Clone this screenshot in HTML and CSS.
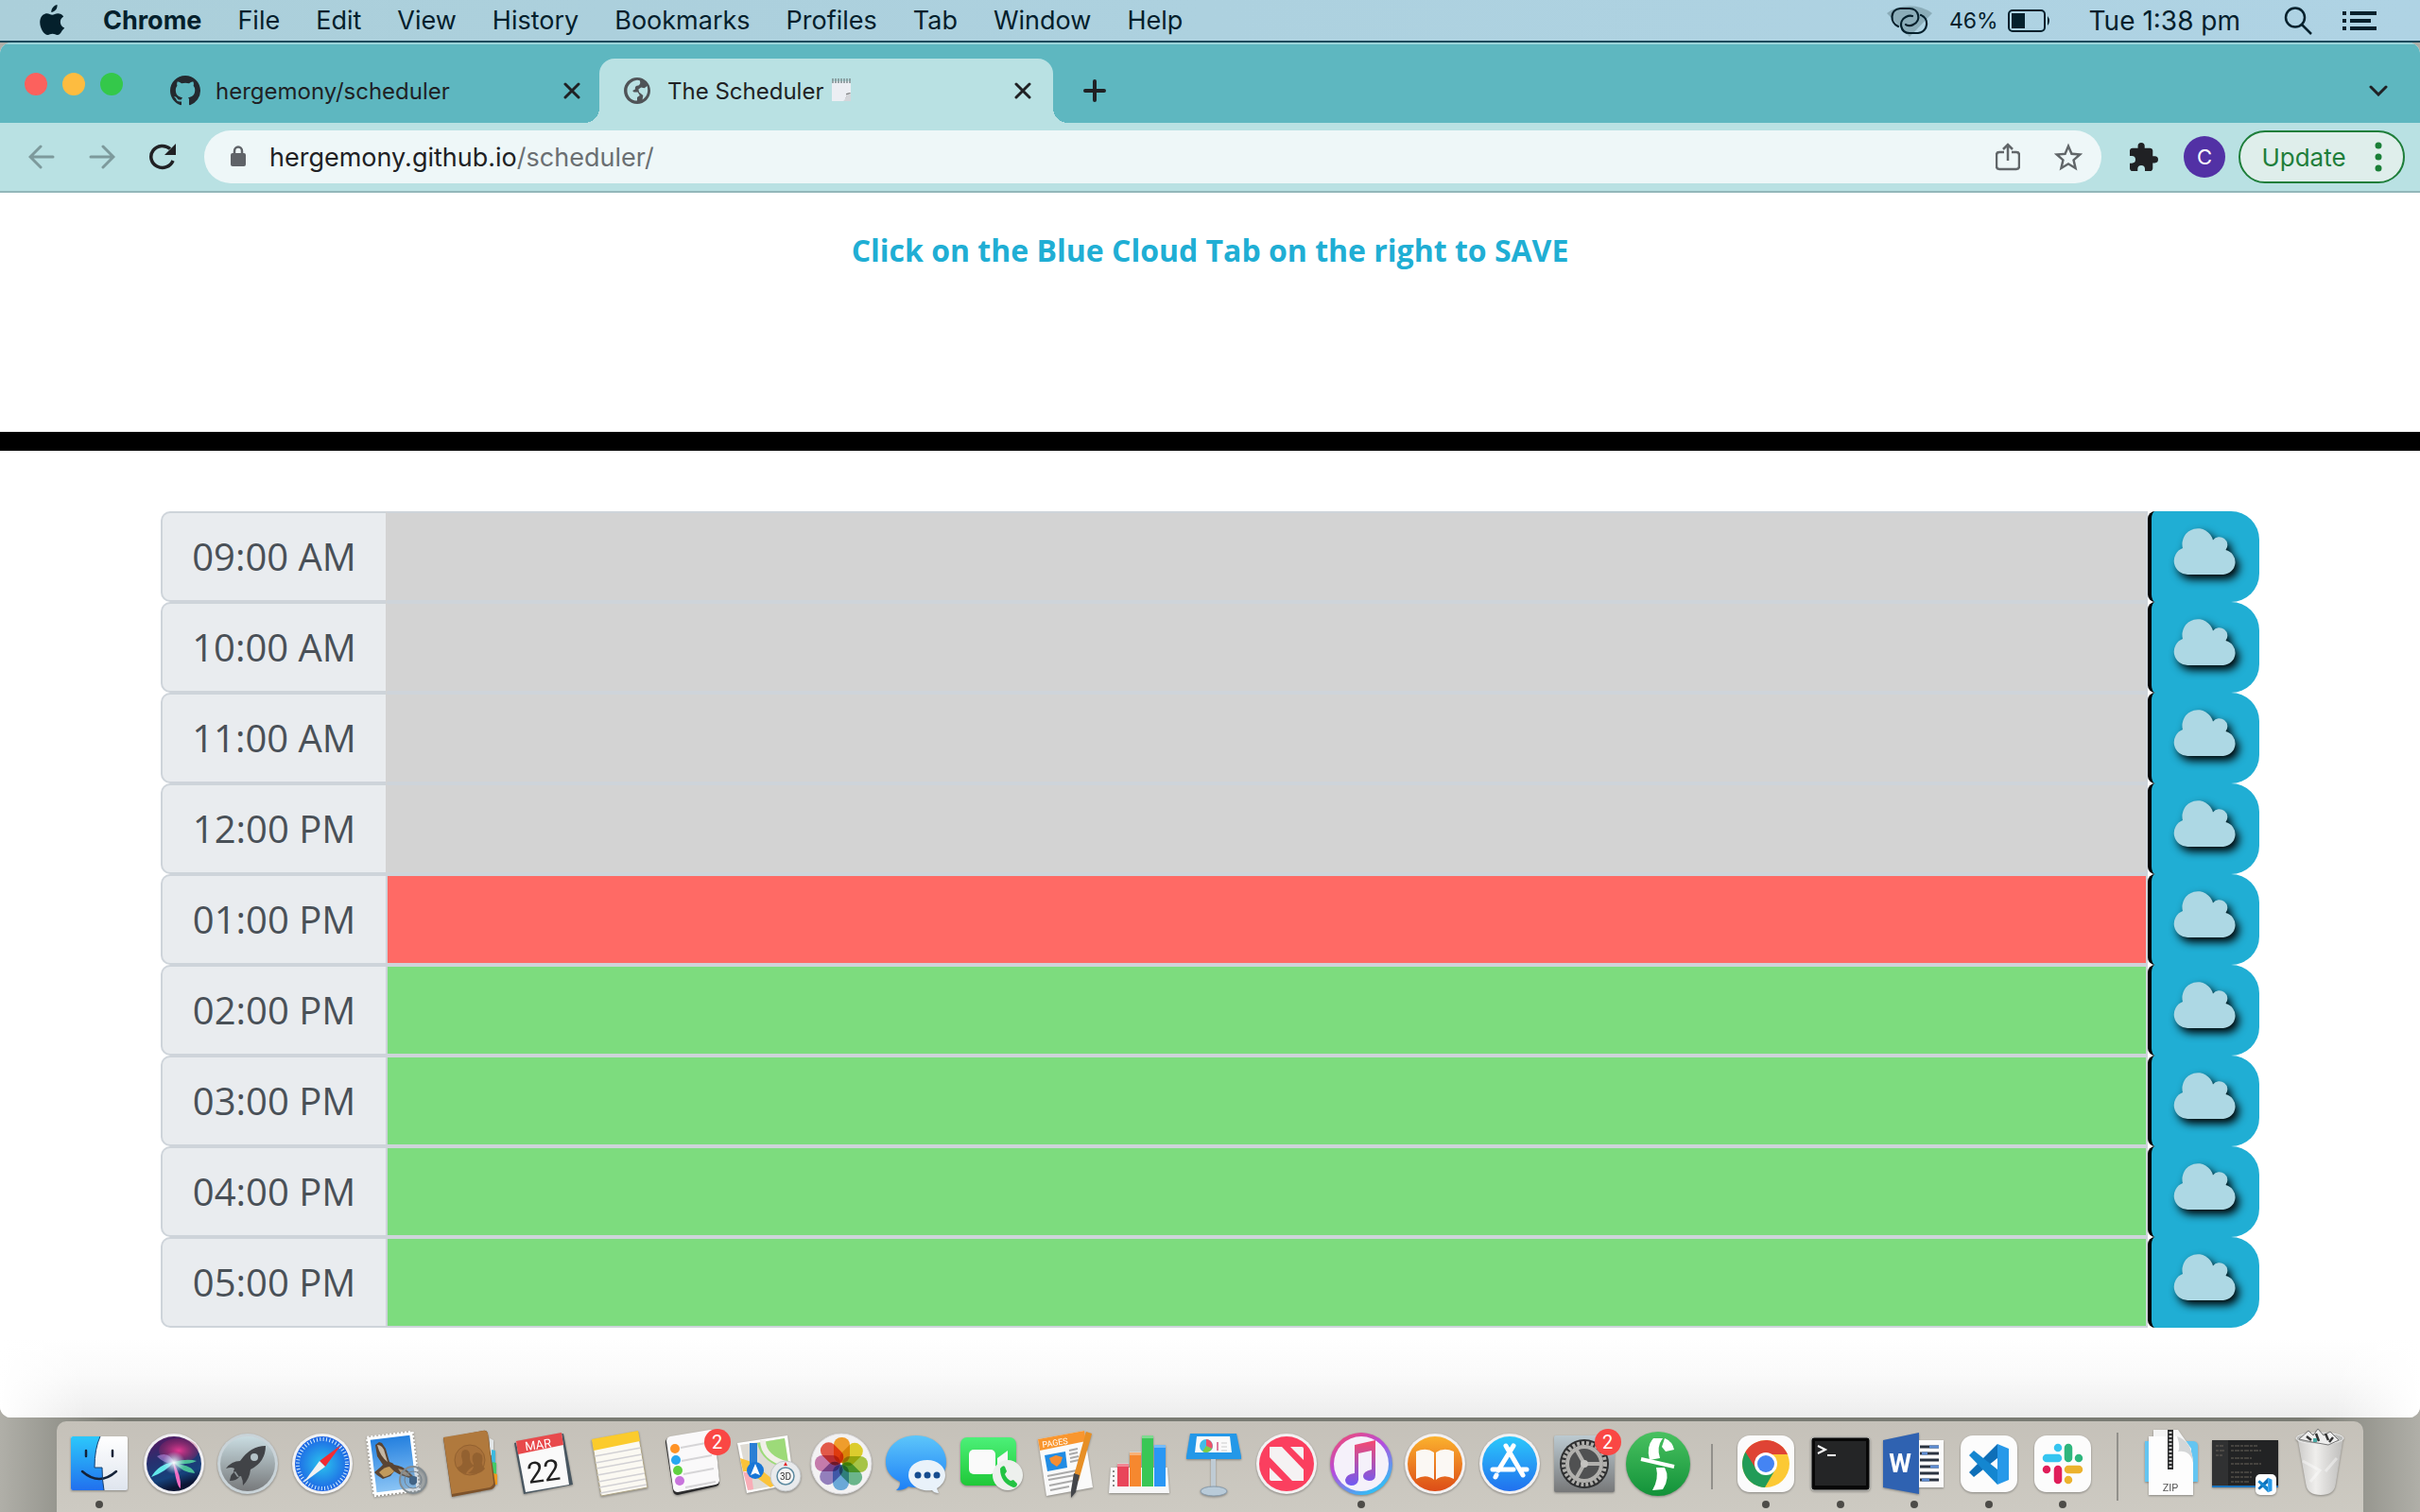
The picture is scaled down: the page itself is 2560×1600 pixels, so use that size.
FILE: index.html
```html
<!DOCTYPE html>
<html lang="en">
<head>
<meta charset="utf-8">
<title>The Scheduler</title>
<link rel="stylesheet" href="styles.css">
</head>
<body>
<div class="desktop">
  <header class="menubar">
    <svg class="apple" width="28" height="34" viewBox="0 0 28 34"><path d="M19.500 0c.3 2.500-.7 4.600-2.200 6.100-1.200 1.300-2.600 1.900-4 1.800-.2-2 .7-4 2-5.500C16.500 1 18.200.2 19.500 0zM24.800 27.200C23.300 30 21.700 32 19.600 32c-2 0-2.700-1.200-5-1.200-2.400 0-3.200 1.200-5 1.200C4.800 32-.2 22.500 1.600 15.400 2.700 11.400 5.700 9.300 8.700 9.300c2.200 0 3.800 1.400 5.600 1.400s3.200-1.400 6-1.400c2.200 0 4.500 1.200 5.900 3.200-5 3-4.200 9.800 1 12-.7 1.300-1.400 1.900-2.400 2.700z"/></svg>
    <nav class="menus">
      <b>Chrome</b><span>File</span><span>Edit</span><span>View</span><span>History</span><span>Bookmarks</span><span>Profiles</span><span>Tab</span><span>Window</span><span>Help</span>
    </nav>
    <div class="status">
      <svg class="hotspot" width="48" height="36" viewBox="0 0 48 36"><path d="M0 10a36 30 0 0 1 48 0L24 35z" fill="#8badb9"/><g fill="none" stroke="#04202c" stroke-width="2.200" stroke-linecap="round"><path d="M12 24C3 20 3 6 14 5h10c10 0 13 13 4 17-3 2-7 1-8 0"/><path d="M36 12c9 3 8 18-3 19h-9C14 31 12 18 20 14q4-2 7-1"/></g></svg>
      <span class="percent">46%</span>
      <svg class="battery" width="46" height="26" viewBox="0 0 46 26"><rect x="1" y="2" width="38" height="22" rx="4" fill="none" stroke="#04202c" stroke-width="2"/><rect x="4" y="5" width="14" height="16" fill="#04202c"/><path d="M42 8q4 5 0 10z" fill="#04202c"/></svg>
      <span class="clock">Tue 1:38 pm</span>
      <svg class="search" width="30" height="30" viewBox="0 0 30 30" fill="none" stroke="#04202c" stroke-width="2.500"><circle cx="12" cy="11.500" r="10"/><path d="M19 19l10 10"/></svg>
      <svg width="36" height="22" viewBox="0 0 36 22" fill="#04202c"><path d="M0 1h4v4H0zM8 1h28v4H8zM0 9h4v4H0zM8 9h22v4H8zM0 17h4v4H0zM8 17h28v4H8z"/></svg>
    </div>
  </header>

  <div class="window">
    <div class="tabstrip">
      <div class="lights"><i class="red"></i><i class="amber"></i><i class="green"></i></div>
      <div class="tab">
        <svg width="32" height="32" viewBox="0 0 16 16" fill="#24292f"><path d="M8 0C3.580 0 0 3.580 0 8c0 3.540 2.290 6.530 5.470 7.590.4.070.55-.17.55-.38 0-.19-.01-.82-.01-1.490-2.010.37-2.530-.49-2.690-.94-.09-.23-.48-.94-.82-1.130-.28-.15-.68-.52-.01-.53.63-.01 1.080.58 1.230.82.72 1.210 1.870.87 2.330.66.070-.52.28-.87.510-1.070-1.780-.2-3.640-.89-3.640-3.950 0-.87.310-1.590.82-2.150-.08-.2-.36-1.020.08-2.120 0 0 .67-.21 2.200.82a7.600 7.600 0 0 1 4 0c1.530-1.040 2.200-.82 2.200-.82.44 1.100.16 1.920.08 2.120.51.560.82 1.270.82 2.150 0 3.070-1.870 3.750-3.650 3.950.29.250.54.730.54 1.480 0 1.070-.01 1.930-.01 2.200 0 .21.150.46.550.38A8.010 8.010 0 0 0 16 8c0-4.420-3.580-8-8-8z"/></svg>
        <span class="title">hergemony/scheduler</span>
        <button class="close" aria-label="Close tab"><svg width="18" height="18" viewBox="0 0 18 18"><path d="M2 2l14 14M16 2L2 16" stroke="#202124" stroke-width="3" stroke-linecap="round"/></svg></button>
      </div>
      <div class="tab active">
        <svg width="28" height="28" viewBox="2 2 20 20" fill="#4f5357"><path d="M12 2C6.480 2 2 6.480 2 12s4.480 10 10 10 10-4.480 10-10S17.520 2 12 2zM4.500 10.500C5.500 7 8 4.500 12 4l2 .3q1 2.500-1 3.700-3 0-2.500 3l-2 1 1 1h3l1.500 2.500-2 1.500v2.500C7.500 19.500 4 16 4.500 10.500zm11.500 8.300l.5-3.300-3-2.500-.5-2 2-1.500 2.500.5 2-1.500c1.200 4 .2 8-3.500 10.300z"/></svg>
        <span class="title">The Scheduler</span>
        <svg class="notepad" width="22" height="26" viewBox="0 0 22 26"><path d="M1 3h20v13l-7 8H1z" fill="#eceef3"/><path d="M21 15l-8 9q5-5 3-8z" fill="#666"/><path d="M13 24q4-3 3-7l5-1v8z" fill="#d4d6da"/><path d="M2 0v5M5 0v5M8 0v5M11 0v5M14 0v5M17 0v5M20 0v5" stroke="#7b8b8e" stroke-width="1.500"/></svg>
        <button class="close" aria-label="Close tab"><svg width="18" height="18" viewBox="0 0 18 18"><path d="M2 2l14 14M16 2L2 16" stroke="#202124" stroke-width="3" stroke-linecap="round"/></svg></button>
      </div>
      <button class="newtab" aria-label="New tab"><svg width="24" height="24" viewBox="0 0 24 24"><path d="M12 2v20M2 12h20" stroke="#202124" stroke-width="4" stroke-linecap="round"/></svg></button>
      <button class="tabsearch" aria-label="Search tabs"><svg width="20" height="12" viewBox="0 0 20 12"><path d="M2 2l8 8 8-8" fill="none" stroke="#202124" stroke-width="3" stroke-linecap="round"/></svg></button>
    </div>

    <div class="toolbar">
      <button aria-label="Back"><svg width="28" height="26" viewBox="0 0 28 26" fill="none" stroke="#7d9a9c" stroke-width="3" stroke-linecap="round"><path d="M26 13H3M13 2L2 13l11 11"/></svg></button>
      <button aria-label="Forward"><svg width="28" height="26" viewBox="0 0 28 26" fill="none" stroke="#7d9a9c" stroke-width="3" stroke-linecap="round"><path d="M2 13h23M15 2l11 11-11 11"/></svg></button>
      <button aria-label="Reload"><svg width="30" height="28" viewBox="0 0 30 28"><path d="M25 18a12 11.500 0 1 1-3-12.500" fill="none" stroke="#202124" stroke-width="3.500"/><path d="M28 0v12H16z" fill="#202124"/></svg></button>
      <div class="omnibox">
        <svg width="18" height="24" viewBox="0 0 18 24"><path d="M5 10V6a4 4.500 0 0 1 8 0v4" fill="none" stroke="#5f6368" stroke-width="2.500"/><rect x="1" y="8" width="16" height="14" rx="2" fill="#5f6368"/></svg>
        <span class="url">hergemony.github.io<span>/scheduler/</span></span>
        <button aria-label="Share"><svg width="26" height="30" viewBox="0 0 26 30" fill="none" stroke="#616669" stroke-width="2.500"><path d="M9 10H4q-3 0-3 3v12q0 3 3 3h18q3 0 3-3V13q0-3-3-3h-5M13 19V2M8 7l5-5 5 5"/></svg></button>
        <button aria-label="Bookmark"><svg width="34" height="32" viewBox="1 1 22 21" fill="#616669"><path d="M22 9.240l-7.190-.62L12 2 9.190 8.630 2 9.240l5.460 4.730L5.820 21 12 17.270 18.180 21l-1.630-7.030L22 9.240zM12 15.400l-3.760 2.270 1-4.280-3.320-2.880 4.380-.38L12 6.100l1.710 4.040 4.380.38-3.320 2.880 1 4.280L12 15.400z"/></svg></button>
      </div>
      <button class="ext" aria-label="Extensions"><svg width="30" height="30" viewBox="2 1 21 21" fill="#202124"><path d="M20.500 11H19V7c0-1.100-.9-2-2-2h-4V3.500a2.500 2.500 0 0 0-5 0V5H4c-1.100 0-2 .9-2 2v3.800h1.500a2.700 2.700 0 0 1 0 5.400H2V20c0 1.100.9 2 2 2h3.800v-1.500a2.700 2.700 0 0 1 5.400 0V22H17c1.100 0 2-.9 2-2v-4h1.500a2.500 2.500 0 0 0 0-5z"/></svg></button>
      <button class="avatar">C</button>
      <button class="update">Update<svg width="8" height="32" viewBox="0 0 8 32" fill="#1a7f37"><circle cx="4" cy="4" r="3.500"/><circle cx="4" cy="16" r="3.500"/><circle cx="4" cy="28" r="3.500"/></svg></button>
    </div>

    <main class="page">
      <div class="hero"><h1>Click on the Blue Cloud Tab on the right to SAVE</h1></div>
      <div class="planner" id="planner"></div>
    </main>
  </div>

  <footer class="dock" id="dock">
    <div class="apps main">
      <div class="app on"><svg viewBox="0 0 72 80"><defs><linearGradient id="fb" x2="0" y2="1"><stop stop-color="#2cc8fb"/><stop offset="1" stop-color="#2170ee"/></linearGradient><linearGradient id="wh" x2="0" y2="1"><stop stop-color="#fff"/><stop offset="1" stop-color="#dfe5ee"/></linearGradient></defs><rect x="6" y="11" width="60" height="57" rx="2" fill="url(#wh)"/><path d="M37 11H8q-2 0-2 2v53q0 2 2 2h33q-2-11-2-24h-8q0-20 6-33z" fill="url(#fb)"/><path d="M18 48q18 16 36 0M22 26v6M50 26v6" fill="none" stroke="#142238" stroke-width="2.500" stroke-linecap="round"/><path d="M37 11q-6 13-6 33h8q0 13 2 24" fill="none" stroke="#17416f"/></svg></div>
      <div class="app"><svg viewBox="0 0 72 80"><defs><linearGradient id="si" x2=".3" y2="1"><stop stop-color="#5c1560"/><stop offset=".45" stop-color="#27306f"/><stop offset=".8" stop-color="#16427c"/><stop offset="1" stop-color="#0c1533"/></linearGradient><radialGradient id="sp"><stop stop-color="#e23a94"/><stop offset="1" stop-color="#b3235e" stop-opacity=".25"/></radialGradient><radialGradient id="sw"><stop stop-color="#fff"/><stop offset="1" stop-color="#bdf" stop-opacity="0"/></radialGradient></defs><circle cx="36" cy="40" r="32" fill="#f0eff2"/><circle cx="36" cy="40" r="29" fill="url(#si)"/><ellipse cx="41" cy="26" rx="21" ry="13" fill="url(#sp)"/><path d="M12 54q8-14 24-16-8 10-24 16z" fill="#62e8ea"/><path d="M36 38q14-4 24-1-8 4-22 3 18 2 20 10-14-1-22-12z" fill="#52d6a0" opacity=".85"/><path d="M35 38q9 14 8 28-4-1-8-28z" fill="#f26bc2"/><path d="M18 32q12-6 18 6-8 4-18-6z" fill="#b58be0" opacity=".6"/><circle cx="36" cy="39" r="12" fill="url(#sw)"/></svg></div>
      <div class="app"><svg viewBox="0 0 72 80"><defs><linearGradient id="la" x2="0" y2="1"><stop stop-color="#c9dce1"/><stop offset="1" stop-color="#77797b"/></linearGradient></defs><circle cx="36" cy="40" r="32" fill="#c9d3d8"/><circle cx="36" cy="40" r="29" fill="url(#la)"/><path d="M55 21q-16 0-27 16-9 0-15 8 6-2 9 0l-1 3 4 6 4-1q2 4 2 10 7-7 8-17 16-8 16-25zM17 58q1-8 6-10l4 6q-3 4-10 4z" fill="#414347"/><circle cx="43" cy="33" r="4" fill="#b3c1c6"/></svg></div>
      <div class="app"><svg viewBox="0 0 72 80"><defs><radialGradient id="sa"><stop stop-color="#2bc4ee"/><stop offset="1" stop-color="#1d64e4"/></radialGradient></defs><circle cx="36" cy="40" r="32" fill="#f2f2f3"/><circle cx="36" cy="40" r="29" fill="url(#sa)"/><circle cx="36" cy="40" r="26" fill="none" stroke="#d8effb" stroke-width="4" stroke-dasharray="1 2.400"/><path d="M56 20L33 37l6 6z" fill="#f32b32"/><path d="M16 60l17-23 6 6z" fill="#f2f2f2"/></svg></div>
      <div class="app"><svg viewBox="0 0 72 80"><defs><linearGradient id="ma" x2="0" y2="1"><stop stop-color="#2480df"/><stop offset="1" stop-color="#8ac4f5"/></linearGradient></defs><g transform="rotate(-7 33 40)"><path d="M9 9h48v62H9z" fill="#fff" stroke="#fff" stroke-width="3" stroke-dasharray="2 2"/><path d="M12 12h42v56H12z" fill="url(#ma)"/></g><path d="M14 20l4-3 3 1 4 6 4 14q4 1 5 3 9 1 16 8l5 5-5 1-9-3-7-4-4 5-8 3-6-4-3-3 6-5 3-3-6-9z" fill="#5a4432"/><path d="M16 20q6 0 8 8l3 10q-8-6-11-18z" fill="#c4b7a4"/><path d="M18 49q6-6 11-6l5 5q-5 5-11 6z" fill="#c19a5c"/><path d="M38 45q8 1 13 8-9 0-13-8z" fill="#a5937c"/><circle cx="54" cy="57" r="14" fill="#71889c" opacity=".3"/><circle cx="54" cy="57" r="14" fill="none" stroke="#838c91" stroke-width="2"/><circle cx="54" cy="57" r="9" fill="none" stroke="#76828c"/><path d="M50 54q4-2 8 0v6q-4 5-8 0z" fill="#426486"/></svg></div>
      <div class="app"><svg viewBox="0 0 72 80"><path d="M56 13l4 2v16h-4z" fill="#e2e6e7"/><path d="M58 25l4 1v13h-4z" fill="#3fb9df"/><path d="M59 38l4 1v12h-4z" fill="#43ca67"/><path d="M60 50l4 1v11h-5z" fill="#ef9a1f"/><path d="M7 13L49 5q4-1 5 3l8 54q0 3-4 5l-42 8z" fill="#7d522a"/><path d="M7 12L49 5q3-1 5 3l6 52q0 3-4 5l-40 7z" fill="#b0793d"/><circle cx="35" cy="36" r="16" fill="#a8713a" stroke="#936130"/><path d="M21 44q8-2 6-8-3-10 3-11 6 0 5 9 0 5 5 8-8 4-9 9-7-2-10-7zM33 50q7-4 6-10-4-10 3-12 8 0 6 10-1 4 3 7-6 8-18 5z" fill="#936130"/></svg></div>
      <div class="app"><svg viewBox="0 0 72 80"><path d="M4 18L56 8l10 54-52 10z" fill="#485660"/><path d="M6 17l48-9 8 54-46 8z" fill="#fafafa"/><path d="M6 16l48-9 2 13-48 10z" fill="#e84a4c"/><g transform="rotate(-8 33 40)" text-anchor="middle"><text x="32" y="24" font-size="13" fill="#fff">MAR</text><text x="34" y="59" font-size="31" fill="#222">22</text></g></svg></div>
      <div class="app"><svg viewBox="0 0 72 80"><path d="M7 15l49-9 10 59-49 9z" fill="#fbf9f2" stroke="#aea485"/><path d="M7 14l49-9 2 11-49 10z" fill="#fbcb2c"/><path d="M10 32l49-9m-48 16l49-9m-48 15l49-9m-48 16l49-9m-48 16l49-9m-48 15l49-9m-48 15l49-9" stroke="#d2d1d4" stroke-width="1.500"/></svg></div>
      <div class="app"><svg viewBox="0 0 72 80"><path d="M12 12l42-7q4 0 5 4l5 50q0 4-4 5l-40 9q-4 0-5-4L7 17q0-4 5-5z" fill="#2c2c2d"/><path d="M12 11l42-7q4 0 5 4l5 49q0 4-4 5l-40 8q-4 0-5-4L8 16q0-4 4-5z" fill="#faf9fa"/><path d="M23 23l32-6m-31 20l32-6m-30 20l32-6m-30 20l32-6" stroke="#d6d5d7" stroke-width="2"/><circle cx="17" cy="24" r="5" fill="#ff9326"/><circle cx="18" cy="36" r="5" fill="#27a7f2"/><circle cx="20" cy="47" r="5" fill="#5fd140"/><circle cx="22" cy="58" r="5" fill="#c874dc"/></svg><span class="badge">2</span></div>
      <div class="app"><svg viewBox="0 0 72 80"><path d="M4 18l53-8 7 51-50 10z" fill="#fff"/><path d="M7 20l47-7 7 47-44 8z" fill="#dedbd4"/><path d="M7 34l12 4 28 23-8 4-24-17-5 0z" fill="#fbc33a"/><path d="M25 18l29-5 5 33Q30 40 25 18z" fill="#9dda79"/><path d="M31 15q0 19 27 26" fill="none" stroke="#f1efe8" stroke-width="6"/><path d="M10 48l9 3 2 16-6 1z" fill="#f8adb7"/><path d="M21 18v22" stroke="#2a7fd5" stroke-width="8"/><circle cx="23" cy="47" r="9" fill="#1876d7"/><path d="M23 40l5 12-5-2-5 2z" fill="#fff"/><circle cx="55" cy="53" r="16" fill="#e8eaec" stroke="#c4c7c9"/><circle cx="55" cy="53" r="9" fill="#f5f6f6" stroke="#5d8ba1" stroke-width="1.500"/><path d="M55 38l2 4h-4z" fill="#e32424"/><text x="55" y="57" font-size="10" text-anchor="middle" fill="#333">3D</text></svg></div>
      <div class="app"><svg viewBox="0 0 72 80"><circle cx="36" cy="40" r="32" fill="#f3f2f3" stroke="#d9d8da"/><g class="petals"><rect x="28" y="12" width="17" height="27" rx="8" fill="#fba62e"/><rect x="28" y="12" width="17" height="27" rx="8" fill="#e7d72f" transform="rotate(45 36 40)"/><rect x="28" y="12" width="17" height="27" rx="8" fill="#aecf49" transform="rotate(90 36 40)"/><rect x="28" y="12" width="17" height="27" rx="8" fill="#70bf92" transform="rotate(135 36 40)"/><rect x="28" y="12" width="17" height="27" rx="8" fill="#6fb1e2" transform="rotate(180 36 40)"/><rect x="28" y="12" width="17" height="27" rx="8" fill="#9a86c6" transform="rotate(225 36 40)"/><rect x="28" y="12" width="17" height="27" rx="8" fill="#cf82b4" transform="rotate(270 36 40)"/><rect x="28" y="12" width="17" height="27" rx="8" fill="#ee5e4c" transform="rotate(315 36 40)"/></g></svg></div>
      <div class="app"><svg viewBox="0 0 72 80"><defs><linearGradient id="ms" x2="0" y2="1"><stop stop-color="#5dc6fa"/><stop offset="1" stop-color="#1d80f7"/></linearGradient></defs><path d="M36 10c18 0 32 12 32 28S54 65 36 65q-5 0-8-1-4 4-13 4 5-4 4-9Q4 52 4 38C4 22 18 10 36 10z" fill="url(#ms)"/><path d="M48 36c11 0 19 7 19 16 0 6-4 11-9 14l2 5q-5 0-7-3C40 70 28 62 28 52s9-16 20-16z" fill="#e9f2fa"/><g fill="#164c8f"><circle cx="38" cy="52" r="3.500"/><circle cx="48" cy="52" r="3.500"/><circle cx="58" cy="52" r="3.500"/></g></svg></div>
      <div class="app"><svg viewBox="0 0 72 80"><defs><linearGradient id="ft" x2="0" y2="1"><stop stop-color="#4cf078"/><stop offset="1" stop-color="#1fc838"/></linearGradient></defs><rect x="5" y="12" width="59" height="51" rx="7" fill="url(#ft)"/><rect x="14" y="25" width="28" height="26" rx="5" fill="#fafafa"/><path d="M44 34l11-8v24l-11-8z" fill="#f6f6f6"/><circle cx="55" cy="52" r="16" fill="#edf0ed"/><path d="M47 45q3-4 5-2l2 5-2 3q2 5 6 7l3-1 4 4q0 4-4 4-14-5-14-20z" fill="#23c343"/></svg></div>
      <div class="app"><svg viewBox="0 0 72 80"><path d="M8 14l49-9 9 60-49 9z" fill="#fafafa"/><path d="M8 14l49-9 2 11-49 10z" fill="#f9962e"/><text x="13" y="23" font-size="9" fill="#fff" transform="rotate(-9 13 23)">PAGES</text><path d="M15 31l22-4 2 17-21 4z" fill="#218ce4"/><path d="M20 34l7-3 7 2-2 6-4 4-6-4z" fill="#f58d32"/><path d="M41 26l9-2m-9 6l9-2m-8 6l9-2m-9 6l9-2M18 53l31-6m-30 10l28-5m-27 11l25-5m-24 10l20-4" stroke="#aaa" stroke-width="2"/><path d="M59 6l6 2-14 50-6-2z" fill="#e78f25"/><path d="M46 50l6 2-4 18-5 6 0-8z" fill="#44464a"/></svg></div>
      <div class="app"><svg viewBox="0 0 72 80"><path d="M7 44h60l2 27H5z" fill="#f7f7f8"/><path d="M10 47v20" stroke="#888" stroke-width="2" stroke-dasharray="2 3"/><path d="M14 40h12v24H14z" fill="#e9455a"/><path d="M27 28h12v36H27z" fill="#f6882f"/><path d="M40 10h12v54H40z" fill="#39c755"/><path d="M53 20h12v44H53z" fill="#2a97f4"/><path d="M14 39h12v4H14zM27 27h12v4H27zM40 10h12v3H40zM53 20h12v3H53z" fill="#fff" opacity=".35"/></svg></div>
      <div class="app"><svg viewBox="0 0 72 80"><path d="M34 34h5v38h-5z" fill="#bfcbd4"/><ellipse cx="37" cy="69" rx="14" ry="5" fill="#b9cbd9" stroke="#869aaa"/><path d="M12 8h49l5 24v3H8v-3z" fill="#2498e8"/><path d="M19 11h35l2 17H17z" fill="#fafafa"/><circle cx="29" cy="21" r="7" fill="#42bce8"/><path d="M29 21V14a7 7 0 0 1 6 10z" fill="#ef5268"/><path d="M29 21l6 3a7 7 0 0 1-10 3z" fill="#7dcd45"/><path d="M41 17v9" stroke="#dd7e9e" stroke-width="2"/><path d="M45 18h6m-6 4h6m-6 4h6" stroke="#ccc"/></svg></div>
      <div class="app"><svg viewBox="0 0 72 80"><circle cx="36" cy="40" r="32" fill="#f3f1f2"/><circle cx="36" cy="40" r="29" fill="#fb3f5f"/><path d="M18 22h13l23 24v12H42L18 33zM40 22h12q2 0 2 2v12zM18 44l14 14H20q-2 0-2-2z" fill="#f5f2f3"/></svg></div>
      <div class="app on"><svg viewBox="0 0 72 80"><defs><linearGradient id="mu" x2=".6" y2="1"><stop stop-color="#fc4961"/><stop offset=".5" stop-color="#b44ddf"/><stop offset="1" stop-color="#33bdf6"/></linearGradient><linearGradient id="no" x2="0" y2="1"><stop stop-color="#f54a70"/><stop offset="1" stop-color="#705af3"/></linearGradient></defs><circle cx="36" cy="40" r="33" fill="url(#mu)"/><circle cx="36" cy="40" r="29" fill="#f5f1fa"/><path d="M29 20l22-5v37q0 6-7 6-6-1-6-5 0-5 9-7V26l-14 3v28q-1 6-8 6-6-1-6-6 1-6 10-7z" fill="url(#no)"/></svg></div>
      <div class="app"><svg viewBox="0 0 72 80"><defs><linearGradient id="bo" x2="0" y2="1"><stop stop-color="#fbb22e"/><stop offset="1" stop-color="#dd4c17"/></linearGradient></defs><circle cx="36" cy="40" r="32" fill="#f3f1f2"/><circle cx="36" cy="40" r="29" fill="url(#bo)"/><path d="M35 28q-8-6-19-1v29q11-6 19 1zM37 28q8-6 19-1v29q-11-6-19 1z" fill="#fbf8f4"/></svg></div>
      <div class="app"><svg viewBox="0 0 72 80"><circle cx="36" cy="40" r="32" fill="#f3f1f2"/><circle cx="36" cy="40" r="29" fill="url(#fb)"/><path d="M32 21l18 31M40 21L24 47M18 46h22m9 0h5M22 52l-1 2" stroke="#fff" stroke-width="5" stroke-linecap="round"/></svg></div>
      <div class="app"><svg viewBox="0 0 72 80"><defs><linearGradient id="se" x2="0" y2="1"><stop stop-color="#bccad1"/><stop offset="1" stop-color="#777879"/></linearGradient></defs><rect x="5" y="10" width="64" height="60" rx="2" fill="url(#se)"/><circle cx="37" cy="40" r="26" fill="#2f3031"/><circle cx="37" cy="40" r="22" fill="none" stroke="#b1b0ad" stroke-width="4" stroke-dasharray="3 2"/><circle cx="37" cy="40" r="18" fill="#505152" stroke="#b1b0ad" stroke-width="4"/><path d="M37 40h18M37 40l-9-16M37 40l-9 16" stroke="#b1b0ad" stroke-width="4"/><circle cx="37" cy="40" r="4" fill="#c4c3c0"/></svg><span class="badge">2</span></div>
      <div class="app"><svg viewBox="0 0 72 80"><defs><linearGradient id="gr" x2="0" y2="1"><stop stop-color="#49c160"/><stop offset="1" stop-color="#129239"/></linearGradient></defs><circle cx="36" cy="40" r="34" fill="url(#gr)"/><path d="M31 13h10q-7 9-3 21l-11 2q-4-14 4-23zM43 13q8 3 10 12l-9 2-4-5zM34 44h9q6 11-2 23l-11 1q7-12 4-24z" fill="#fff"/><path d="M18 35l35 8" stroke="#fff" stroke-width="4"/></svg></div>
    </div>
    <i class="sep short"></i>
    <div class="apps open">
      <div class="app on"><svg viewBox="0 0 72 80"><rect x="6" y="10" width="60" height="60" rx="13" fill="#fbfbfb"/><circle cx="36" cy="40" r="25" fill="#fcc934"/><path d="M36 40L14.400 27.500A25 25 0 0 0 35 65l11-19z" fill="#229c58"/><path d="M36 30h23A25 25 0 0 0 14.400 27.500L26 46z" fill="#df4334"/><circle cx="36" cy="40" r="12" fill="#fff"/><circle cx="36" cy="40" r="9" fill="#4484f3"/></svg></div>
      <div class="app on"><svg viewBox="0 0 72 80"><rect x="5" y="12" width="62" height="56" rx="3" fill="#080808" stroke="#b7b8b5"/><rect x="9" y="16" width="54" height="47" fill="#242526"/><path d="M12 21l8 4-8 4M22 31h9" fill="none" stroke="#fff" stroke-width="2"/></svg></div>
      <div class="app on"><svg viewBox="0 0 72 80"><path d="M38 15h29v50H38z" fill="#fafafa"/><path d="M42 22h20m-20 7h20m-20 7h20m-20 7h20m-20 7h20m-20 7h20" stroke="#2a3340" stroke-width="3"/><path d="M52 22h10m-18 7h6m3 14h9m-18 14h8" stroke="#5d8bd0" stroke-width="3"/><path d="M3 15l38-8v65L3 65z" fill="#2f62b1"/><text x="21" y="49" font-size="27" font-weight="700" text-anchor="middle" fill="#fff">W</text></svg></div>
      <div class="app on"><svg viewBox="0 0 72 80"><rect x="6" y="10" width="60" height="60" rx="13" fill="#fcfcfc"/><g id="code"><path d="M45 19v15L20 54l-5-5z" fill="#0e6fb8"/><path d="M15 31l5-5 25 20v16z" fill="#1486d0"/><path d="M45 19l12 5v33l-12 5z" fill="#2799e9"/></g></svg></div>
      <div class="app on"><svg viewBox="0 0 72 80"><rect x="6" y="10" width="60" height="60" rx="13" fill="#fcfcfc"/><g stroke-width="8.500" stroke-linecap="round"><path d="M19 34h12M31 23v0" stroke="#36c5f0"/><path d="M42 23v11M53 34v0" stroke="#2eb67d"/><path d="M53 46H42M42 57v0" stroke="#ecb22e"/><path d="M31 57V46M19 46v0" stroke="#e01e5a"/></g></svg></div>
    </div>
    <i class="sep"></i>
    <div class="apps files">
      <div class="app"><svg viewBox="0 0 72 80"><path d="M8 16h50q6 0 6 5v38H8z" fill="#64c5f1"/><path d="M17 4h26l14 20v42H17z" fill="#f4f4f4"/><path d="M12 11h30q16 8 17 28v34H12z" fill="#fdfdfd"/><path d="M42 11q4 12 1 16 13-2 16 12Q58 16 42 11z" fill="#d4d6d7"/><path d="M35 4v42" stroke="#2b2c2d" stroke-width="6"/><path d="M35 6v38" stroke="#c8c8c8" stroke-width="3" stroke-dasharray="2 2"/><text x="35" y="69" font-size="11" text-anchor="middle" fill="#555">ZIP</text></svg></div>
      <div class="app"><svg viewBox="0 0 72 80"><path d="M1 15h70v50H1z" fill="#222324"/><path d="M1 63h70v2H1z" fill="#1b73bd"/><path d="M1 15h17v48H1z" fill="#303132"/><path d="M21 21h28m-28 5h32m-32 8h22m-22 6h32m-32 9h22m-22 5h22m-22 5h20M5 21h8m-8 5h9m-9 5h7" stroke="#68645b" stroke-dasharray="3 1 5 1"/><rect x="47" y="51" width="22" height="22" rx="5" fill="#fff"/><use href="#code" transform="translate(44 48) scale(.36)"/></svg></div>
      <div class="app"><svg viewBox="0 0 72 80"><defs><linearGradient id="tr"><stop stop-color="#cbcac8"/><stop offset=".4" stop-color="#efeeec"/><stop offset="1" stop-color="#bdbcba"/></linearGradient></defs><path d="M10 11l10 51q2 11 17 11t17-11l9-51z" fill="url(#tr)" transform="translate(3 0) scale(.92 1)"/><ellipse cx="36" cy="13" rx="25" ry="6" fill="#babbb9" stroke="#eee"/><path d="M14 14l10-9 5 5 5-7 6 7 7-4 9 9-11 5-17-3z" fill="#eee" stroke="#777"/><path d="M22 11l5 4m5-7l3 8m7-8l3 7m5-3l-4 5" stroke="#333" stroke-width="2.500"/><path d="M29 13h4v4h-4z" fill="#49a9a4"/><path d="M18 37l18 10-10 12m28-25L42 48" fill="none" stroke="#fff" stroke-width="3" opacity=".4"/></svg></div>
    </div>
  </footer>
</div>
<script src="planner.js"></script>
</body>
</html>
```
FILE: planner.js
```
const hours = [
  ["09:00 AM", "past"], ["10:00 AM", "past"], ["11:00 AM", "past"],
  ["12:00 PM", "past"], ["01:00 PM", "present"], ["02:00 PM", "future"],
  ["03:00 PM", "future"], ["04:00 PM", "future"], ["05:00 PM", "future"]
];
document.getElementById("planner").innerHTML = hours.map(([time, state], i) => `
  <div class="slot">
    <label for="slot-${i}">${time}</label>
    <textarea id="slot-${i}" class="${state}"></textarea>
    <button class="save" aria-label="Save ${time}">
      <svg width="66" height="50" viewBox="0 0 66 50"><path d="M15 48a14.500 14.500 0 0 1-6-28A16.500 16.500 0 0 1 41 11.500a8.500 8.500 0 0 1 13.500 10.500A13.200 13.200 0 0 1 52 48z"/></svg>
    </button>
  </div>`).join("");
```
FILE: styles.css
```css
* { box-sizing: border-box; }
html, body { height: 100%; }
body { margin: 0; font-family: Inter, "Liberation Sans", sans-serif; }
svg { display: block; flex: none; }
button { border: 0; padding: 0; background: none; font: inherit; color: inherit; display: flex; align-items: center; justify-content: center; }

.desktop {
  min-height: 100vh;
  display: flex;
  flex-direction: column;
  background: linear-gradient(90deg, #b0afa8, #7a7b73 5%, #7a7b73 95%, #b0afa8);
  overflow: hidden;
}

.menubar {
  height: 45px;
  flex: none;
  display: flex;
  align-items: center;
  padding: 0 46px 0 41px;
  background: linear-gradient(90deg, #abcfda, #afd3e4);
  border-bottom: 2px solid #1d4a5c;
  color: #04202c;
  font-size: 27px;
}
.apple { fill: #04202c; }
.menus { display: flex; gap: 38px; margin-left: 40px; }
.status { display: flex; align-items: center; margin-left: auto; }
.percent { font-size: 23px; margin: 0 10px 0 18px; }
.clock { margin: 0 46px 0 40px; font-size: 28px; }
.search { margin-right: 32px; }

.window {
  flex: 1;
  display: flex;
  flex-direction: column;
  border-radius: 12px;
  overflow: hidden;
  background: #fff;
}

.tabstrip {
  height: 85px;
  flex: none;
  display: flex;
  align-items: flex-end;
  padding: 0 34px 0 26px;
  background: #5eb7c0;
  border-top: 2px solid #9ad3d9;
  color: #202124;
  font-size: 24px;
}
.lights { display: flex; gap: 16px; margin: 0 32px 29px 0; }
.lights i { width: 24px; height: 24px; border-radius: 50%; }
.red { background: #fc615d; }
.amber { background: #fdbc40; }
.green { background: #34c84a; }
.tab { width: 472px; height: 68px; display: flex; align-items: center; padding: 0 20px 0 18px; }
.tab .title { margin-left: 16px; }
.tab .close { margin-left: auto; }
.active { position: relative; width: 480px; padding: 0 23px 0 26px; background: #b9e1e3; border-radius: 16px 16px 0 0; }
.active .title { margin-left: 18px; }
.active::before, .active::after { content: ""; position: absolute; bottom: 0; width: 16px; height: 16px; }
.active::before { right: 100%; background: radial-gradient(circle at 0 0, transparent 16px, #b9e1e3 16px); }
.active::after { left: 100%; background: radial-gradient(circle at 100% 0, transparent 16px, #b9e1e3 16px); }
.notepad { margin-left: 8px; }
.newtab { margin-left: 32px; height: 68px; }
.tabsearch { margin-left: auto; height: 68px; }

.toolbar {
  height: 74px;
  flex: none;
  display: flex;
  align-items: center;
  padding: 0 16px 0 30px;
  background: #b9e1e3;
  border-bottom: 2px solid #93b7ba;
}
.toolbar > button + button { margin-left: 36px; }
.omnibox {
  flex: 1;
  height: 56px;
  display: flex;
  align-items: center;
  margin-left: 28px;
  padding: 0 18px 0 27px;
  border-radius: 28px;
  background: #eef7f8;
}
.url { flex: 1; margin-left: 24px; font-size: 27px; color: #202124; }
.url span { color: #6a6f72; }
.omnibox button + button { margin-left: 34px; }
.toolbar > .ext { margin-left: 30px; }
.toolbar > .avatar { width: 44px; height: 44px; margin-left: 27px; border-radius: 50%; background: #5231a5; color: #fff; font-size: 22px; }
.toolbar > .update { width: 176px; height: 56px; margin-left: 14px; gap: 30px; border: 2px solid #1e7e3a; border-radius: 28px; background: #dfeeeb; color: #1e7e3a; font-size: 26px; }

.page {
  flex: 1;
  font-family: "Open Sans", sans-serif;
  background:
    linear-gradient(90deg, #fff, transparent 90px calc(100% - 90px), #fff),
    linear-gradient(transparent calc(100% - 84px), #fafafa calc(100% - 45px), #ededed);
}
.hero { height: 273px; padding-top: 37px; border-bottom: 20px solid #000; }
h1 { margin: 0; text-align: center; font-size: 32px; line-height: 48px; color: #20aed4; }
.planner { padding: 64px 170px 0; }
.slot { display: flex; height: 96px; }
.slot label {
  width: 238px;
  display: flex;
  align-items: center;
  justify-content: center;
  padding-bottom: 2px;
  border: 2px solid #ced4da;
  border-right: 0;
  border-radius: 10px 0 0 10px;
  background: #e9ecef;
  color: #495057;
  font-size: 40px;
}
.slot textarea { flex: 1; min-width: 0; padding: 0; border: 2px solid #ced4da; resize: none; outline: 0; }
.slot .past { background: #d3d3d3; border-left-color: #d3d3d3; }
.present { background: #ff6a65; }
.future { background: #7ddc7e; }
.save { width: 118px; padding-bottom: 8px; border-left: 4px solid #000; border-radius: 8px 30px 30px 8px; background: #20aed4; }
.save path { fill: #add8e4; filter: drop-shadow(4px 5px 5px #000); }
.save svg { overflow: visible; }

.dock {
  height: 96px;
  flex: none;
  display: flex;
  margin: 4px 60px 0;
  padding: 0 7px 0 6px;
  border-radius: 10px 10px 0 0;
  background: linear-gradient(#c5c1b9, #cdcac2);
  font-family: Roboto, sans-serif;
}
.apps { display: flex; }
.main { flex: 22; }
.open { flex: 5; }
.files { flex: 3; }
.app { position: relative; flex: 1 1 0; min-width: 0; display: flex; justify-content: center; padding-top: 5px; }
.app svg { width: 72px; height: 80px; filter: drop-shadow(0 1px 1px #0005); }
.on::after { content: ""; position: absolute; bottom: 4px; width: 8px; height: 8px; border-radius: 50%; background: #4d4c48; }
.badge { position: absolute; top: 8px; right: 0; width: 28px; height: 28px; border-radius: 50%; background: #fa4744; color: #fff; font-size: 20px; line-height: 28px; text-align: center; }
.petals rect { mix-blend-mode: multiply; }
.sep { width: 2px; margin: 12px 17px; background: #92908b; }
.short { margin: 24px 17px; }
```
